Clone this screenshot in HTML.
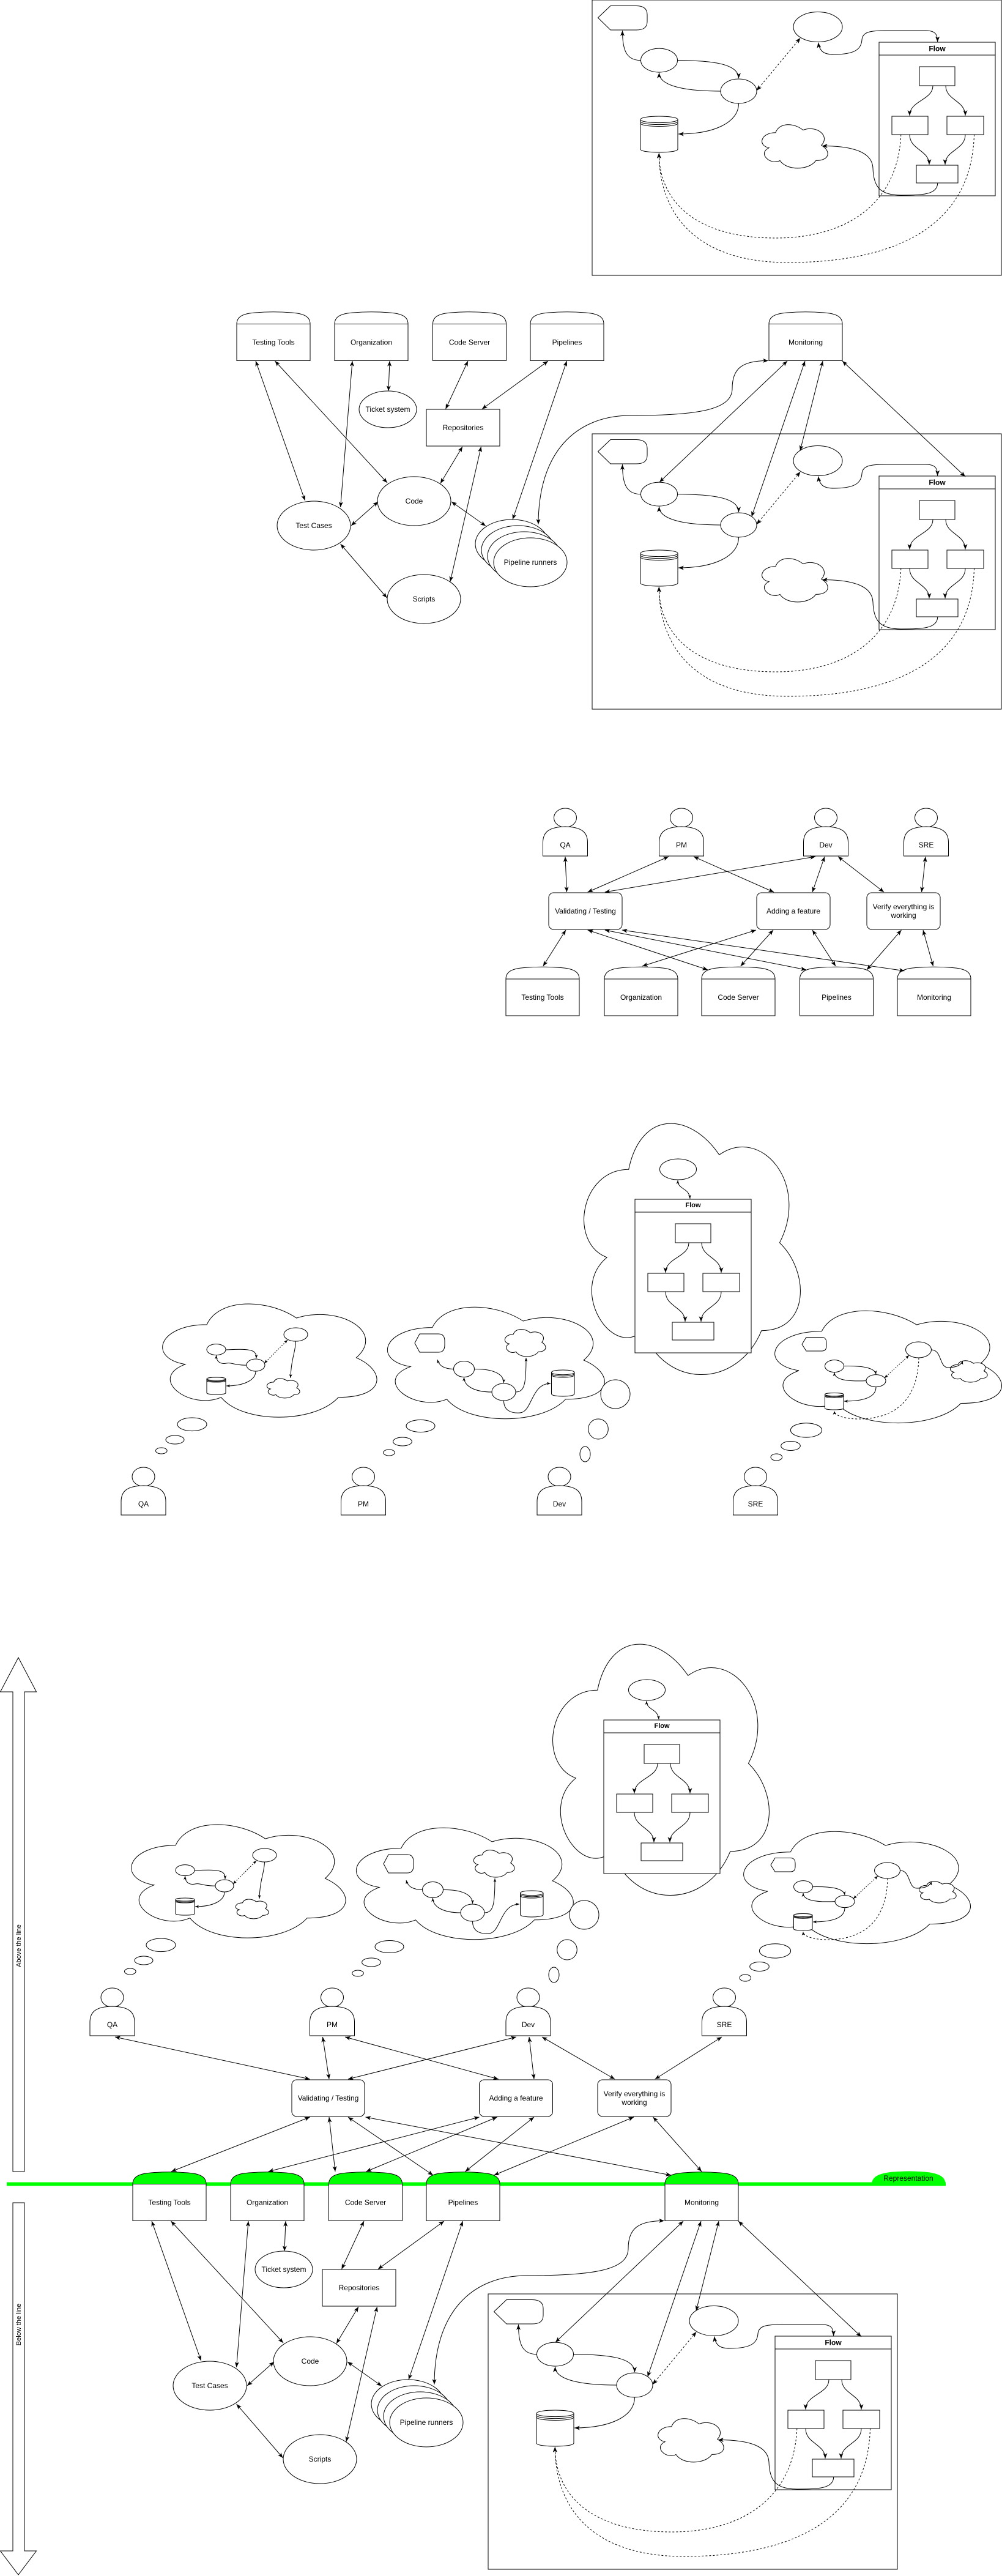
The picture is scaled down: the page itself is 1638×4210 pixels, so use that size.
<!DOCTYPE html>
<html><head><meta charset="utf-8"><style>
html,body{margin:0;padding:0;background:#fff;}
svg{display:block;}
.l,.b,.d,.e,.s,.sd,.de{fill:none;stroke:#000;stroke-width:1;}
.b{marker-start:url(#a);marker-end:url(#a);}
.e{marker-end:url(#a);}
.d{stroke-dasharray:3 3;marker-start:url(#a);marker-end:url(#a);}
.de{fill:none;stroke:#000;stroke-width:1;stroke-dasharray:3 3;marker-end:url(#a);}
.s{marker-end:url(#m);}
.sb{fill:none;stroke:#000;stroke-width:1;marker-start:url(#m);marker-end:url(#m);}
.sd{stroke-dasharray:2 2;marker-start:url(#m);marker-end:url(#m);}
.w{fill:#fff;stroke:#000;stroke-width:1;}
text{font-family:"Liberation Sans",Arial,sans-serif;font-size:12px;text-anchor:middle;dominant-baseline:central;fill:#000;}
.fl{font-weight:bold;}
.sm{font-size:11px;}
</style></head><body>
<svg width="1638" height="4210" viewBox="0 0 1638 4210" xmlns="http://www.w3.org/2000/svg">
<defs>
<marker id="a" viewBox="0 0 10 8" refX="10" refY="4" markerWidth="9" markerHeight="7" orient="auto-start-reverse" markerUnits="userSpaceOnUse"><path d="M0,0 L10,4 L0,8 L2.5,4 Z" fill="#000"/></marker>
<marker id="m" viewBox="0 0 10 8" refX="10" refY="4" markerWidth="6" markerHeight="5" orient="auto-start-reverse" markerUnits="userSpaceOnUse"><path d="M0,0 L10,4 L0,8 L2.5,4 Z" fill="#000"/></marker>
<path id="cl" class="w" vector-effect="non-scaling-stroke" d="M25,25 C5,25 0,50 16,55 C0,66 18,90 31,80 C40,100 70,100 80,80 C100,80 100,60 87.5,50 C100,30 80,10 62.5,20 C50,5 30,5 25,25 Z"/>
<g id="db">
<path class="w" vector-effect="non-scaling-stroke" d="M0,9 C0,-3 100,-3 100,9 V91 C100,103 0,103 0,91 Z"/>
<path class="l" vector-effect="non-scaling-stroke" d="M0,9 C0,21 100,21 100,9 M0,14 C0,26 100,26 100,14 M0,19 C0,31 100,31 100,19"/>
</g>
<g id="st">
<path d="M0,20 C0,8 10,3 30,1.5 Q60,-1 90,1.5 C110,3 120,8 120,20 Z" style="fill:var(--hdr,#fff);stroke:#000;stroke-width:1"/>
<rect x="0" y="20" width="120" height="60" class="w"/>
</g>
<g id="ps">
<ellipse cx="0" cy="15.5" rx="18.5" ry="15.5" class="w"/>
<path class="w" d="M-36.5,78 V56 C-36.5,40 -28,30.5 0,30 C28,30.5 36.5,40 36.5,56 V78 Z"/>
</g>
<g id="flow">
<rect x="0" y="0" width="190" height="251" class="w"/>
<line x1="0" y1="21" x2="190" y2="21" class="l"/>
<rect x="66" y="40" width="58" height="31" class="w"/>
<rect x="21" y="121" width="59" height="30" class="w"/>
<rect x="111" y="121" width="60" height="30" class="w"/>
<rect x="61" y="201" width="68" height="29" class="w"/>
<path class="e" d="M88,71 C88,95 50,95 50,120"/>
<path class="e" d="M109,71 C109,95 141,95 141,120"/>
<path class="e" d="M50,151 C50,176 82,176 82,200"/>
<path class="e" d="M141,151 C141,176 108,176 108,200"/>
</g>
<g id="panel">
<rect x="0" y="0" width="669" height="450" class="w"/>
<path class="w" d="M9.5,29 L30,9.5 H72 C84,9.5 90,14 90,24 V35 C90,45 84,49 72,49 H30 Z"/>
<ellipse cx="109.5" cy="98.6" rx="30" ry="19.5" class="w"/>
<ellipse cx="239.5" cy="149" rx="29.5" ry="20" class="w"/>
<ellipse cx="369" cy="44" rx="40" ry="24.5" class="w"/>
<use href="#db" transform="translate(79,190) scale(0.61,0.59)"/>
<use href="#cl" transform="translate(269.8,196) scale(1.2,0.83)"/>
<use href="#flow" x="469" y="69"/>
<path class="e" d="M79,98.6 C55,98.6 49.5,80 49.5,50"/>
<path class="e" d="M139.5,98.6 C200,99 239.5,105 239.5,128"/>
<path class="e" d="M210,149 C150,149 109.5,140 109.5,119"/>
<path class="e" d="M239.5,169 C239.5,200 200,219 141,219"/>
<path class="d" d="M268.9,148 L340.4,62"/>
<path class="b" d="M369.5,69.5 C372,85 380,89 395,89 C430,89 440,80 441,65 C442,52 455,50 480,50 L545,50 C560,50 564.6,55 564.6,68.5"/>
<path class="e" d="M564.7,299 C564.7,318 540,319 505,319 C470,319 460,305 459,275 C458,250 430,238.5 376,238.5"/>
<path class="de" d="M504.8,220 C500,330 420,389 300,389 C170,389 109.3,330 109.3,250"/>
<path class="de" d="M624.5,220 C620,380 480,429 320,429 C170,429 109.3,350 109.3,250"/>
</g>
<g id="s2">
<use href="#st" x="387" y="509.5"/>
<use href="#st" x="547" y="509.5"/>
<use href="#st" x="707.5" y="509.5"/>
<use href="#st" x="867" y="509.5"/>
<use href="#st" x="1257" y="509.5"/>
<ellipse cx="634" cy="669" rx="47" ry="30" class="w"/>
<rect x="697" y="669" width="120" height="60" class="w"/>
<ellipse cx="677" cy="819" rx="60" ry="40" class="w"/>
<ellipse cx="513" cy="859" rx="60" ry="40" class="w"/>
<ellipse cx="693" cy="979" rx="60" ry="40" class="w"/>
<ellipse cx="837" cy="889" rx="60" ry="40" class="w"/>
<ellipse cx="847" cy="899" rx="60" ry="40" class="w"/>
<ellipse cx="857" cy="909" rx="60" ry="40" class="w"/>
<ellipse cx="867" cy="919" rx="60" ry="40" class="w"/>
<use href="#panel" x="968" y="709"/>
<path class="b" d="M418,590 L498.6,818"/>
<path class="b" d="M449.5,590 L633,789"/>
<path class="b" d="M576,590 L556.6,829"/>
<path class="b" d="M637,590 L635,639"/>
<path class="b" d="M765,590 L728.5,668.5"/>
<path class="b" d="M896,590 L788,668.5"/>
<path class="b" d="M926.6,590 L838,849"/>
<path class="b" d="M756,730 L720,790"/>
<path class="b" d="M786.5,730 L736,950.5"/>
<path class="b" d="M738,820 L794,859.5"/>
<path class="b" d="M618,820 L574,859"/>
<path class="b" d="M556.6,889 L632.5,977"/>
<path class="b" d="M1256,589.5 C1210,589 1197,605 1197,635 C1197,670 1140,679 1032,679 C940,679 880,740 880,857"/>
<path class="b" d="M1287,590 L1078,788"/>
<path class="b" d="M1316,590 L1228.6,844.5"/>
<path class="b" d="M1345,590 L1308,736.6"/>
<path class="b" d="M1377,590 L1578,779"/>
</g>
<g id="s4">
<use href="#cl" transform="translate(240.3,2110.9) scale(3.91,2.16)"/>
<use href="#cl" transform="translate(607.7,2116.4) scale(3.96,2.13)"/>
<use href="#cl" transform="translate(929,1791.5) scale(3.948,4.79)"/>
<use href="#cl" transform="translate(1239.8,2122.3) scale(4.138,2.14)"/>
<ellipse cx="314" cy="2327.8" rx="24" ry="10.8" class="w"/>
<ellipse cx="286" cy="2353" rx="15" ry="7" class="w"/>
<ellipse cx="263.8" cy="2371" rx="9.3" ry="5" class="w"/>
<ellipse cx="687.5" cy="2330.5" rx="23.5" ry="10" class="w"/>
<ellipse cx="658" cy="2356" rx="15.4" ry="7" class="w"/>
<ellipse cx="636" cy="2374" rx="9.3" ry="5" class="w"/>
<ellipse cx="1006" cy="2278.5" rx="24" ry="23.5" class="w"/>
<ellipse cx="978" cy="2335.5" rx="16.3" ry="16.5" class="w"/>
<ellipse cx="956.5" cy="2376.5" rx="8.5" ry="12.5" class="w"/>
<ellipse cx="1318" cy="2337.4" rx="25.6" ry="11.7" class="w"/>
<ellipse cx="1292.5" cy="2363" rx="15.8" ry="7.5" class="w"/>
<ellipse cx="1269.3" cy="2381.5" rx="9.3" ry="5.5" class="w"/>
<use href="#ps" x="234.5" y="2398"/>
<use href="#ps" x="594" y="2398"/>
<use href="#ps" x="914.5" y="2398"/>
<use href="#ps" x="1235" y="2398"/>
<ellipse cx="353.5" cy="2205.6" rx="15.5" ry="9" class="w"/>
<ellipse cx="418" cy="2231" rx="15" ry="10" class="w"/>
<ellipse cx="483.5" cy="2181" rx="19.5" ry="11" class="w"/>
<use href="#db" transform="translate(338,2251) scale(0.31,0.28)"/>
<use href="#cl" transform="translate(432.4,2249.5) scale(0.6,0.373)"/>
<path class="s" d="M369,2206 C389,2205 410,2204 416,2210 C419,2213 419,2216 419,2220"/>
<path class="s" d="M403,2231 C385,2232 378,2226 370,2228 C360,2230 353.5,2225 353.5,2215"/>
<path class="s" d="M418,2241 C418,2255 400,2265 370,2265"/>
<path class="sd" d="M432,2228 L470,2190"/>
<path class="s" d="M483.5,2192 C483,2210 476,2220 475,2252"/>
<path class="w" d="M678,2195 L686,2180 H717 C724,2180 727,2184 727,2192 V2198 C727,2206 724,2210 717,2210 H686 Z"/>
<use href="#cl" transform="translate(820.5,2167.8) scale(0.744,0.518)"/>
<ellipse cx="758.5" cy="2237.5" rx="17" ry="13" class="w"/>
<ellipse cx="823.5" cy="2275" rx="19.5" ry="14" class="w"/>
<use href="#db" transform="translate(901.5,2239) scale(0.375,0.43)"/>
<path class="s" d="M741.5,2237.5 C725,2237 718,2232 715,2222"/>
<path class="s" d="M775.5,2237.5 C805,2237 823.5,2245 823.5,2260"/>
<path class="s" d="M804,2275 C775,2275 758.5,2265 758.5,2251"/>
<path class="s" d="M843,2275 C858,2275 860,2260 860,2219"/>
<path class="s" d="M823.5,2289 C823.5,2305 835,2310 850,2309 C870,2308 868,2261 900,2261"/>
<ellipse cx="1108.5" cy="1911" rx="30" ry="17" class="w"/>
<use href="#flow" x="1038" y="1960"/>
<path class="sb" d="M1108,1929 C1108,1945 1126,1940 1128,1959"/>
<path class="w" d="M1311,2197 L1318,2185.5 H1343 C1349,2185.5 1351,2189 1351,2195 V2199 C1351,2205 1349,2208 1343,2208 H1318 Z"/>
<ellipse cx="1364" cy="2232.6" rx="15.5" ry="10" class="w"/>
<ellipse cx="1432" cy="2256.6" rx="16" ry="10" class="w"/>
<ellipse cx="1501.5" cy="2206" rx="21" ry="13" class="w"/>
<use href="#cl" transform="translate(1549,2220) scale(0.678,0.41)"/>
<use href="#db" transform="translate(1348.5,2276.5) scale(0.305,0.275)"/>
<path class="s" d="M1379.5,2232.6 C1410,2232 1430,2235 1432,2246"/>
<path class="s" d="M1416,2256.6 C1385,2258 1364,2255 1364,2243"/>
<path class="s" d="M1432,2267 C1432,2282 1415,2290 1380,2290"/>
<path class="sd" d="M1446,2252 L1486,2215"/>
<path class="s" d="M1522.5,2206 C1540,2206 1535,2235 1550,2235 C1565,2235 1572,2230 1573.7,2224"/>
<path class="de" style="marker-end:url(#m)" d="M1502,2219 C1500,2300 1450,2320 1400,2319 C1375,2318 1364,2312 1364,2306"/>
</g>
</defs>

<use href="#panel" x="968" y="0"/>
<text x="1532" y="79.5" class="fl">Flow</text>

<use href="#s2"/>
<text x="447" y="559.5">Testing Tools</text>
<text x="607" y="559.5">Organization</text>
<text x="767.5" y="559.5">Code Server</text>
<text x="927" y="559.5">Pipelines</text>
<text x="1317" y="559.5">Monitoring</text>
<text x="634" y="669">Ticket system</text>
<text x="757" y="699">Repositories</text>
<text x="677" y="819">Code</text>
<text x="513" y="859">Test Cases</text>
<text x="693" y="979">Scripts</text>
<text x="867" y="919">Pipeline runners</text>
<text x="1532" y="788.5" class="fl">Flow</text>

<use href="#ps" x="924" y="1321"/>
<use href="#ps" x="1114" y="1321"/>
<use href="#ps" x="1350" y="1321"/>
<use href="#ps" x="1514" y="1321"/>
<text x="924" y="1381">QA</text>
<text x="1114" y="1381">PM</text>
<text x="1350" y="1381">Dev</text>
<text x="1514" y="1381">SRE</text>
<rect x="897" y="1459" width="120" height="60" rx="8" class="w"/>
<rect x="1237" y="1459" width="120" height="60" rx="8" class="w"/>
<rect x="1417" y="1459" width="120" height="60" rx="8" class="w"/>
<text x="957" y="1489">Validating / Testing</text>
<text x="1297" y="1489">Adding a feature</text>
<text x="1477" y="1482">Verify everything is</text>
<text x="1477" y="1496">working</text>
<use href="#st" x="827" y="1580"/>
<use href="#st" x="988" y="1580"/>
<use href="#st" x="1147" y="1580"/>
<use href="#st" x="1307.5" y="1580"/>
<use href="#st" x="1467" y="1580"/>
<text x="887" y="1630">Testing Tools</text>
<text x="1048" y="1630">Organization</text>
<text x="1207" y="1630">Code Server</text>
<text x="1367.5" y="1630">Pipelines</text>
<text x="1527" y="1630">Monitoring</text>
<path class="b" d="M924,1400 L926.5,1458"/>
<path class="b" d="M1093,1400 L960.7,1458"/>
<path class="b" d="M1134,1400 L1265,1458"/>
<path class="b" d="M1333,1400 L988.8,1458"/>
<path class="b" d="M1348,1400 L1328,1458"/>
<path class="b" d="M1370,1400 L1445,1458"/>
<path class="b" d="M1513,1400 L1506.6,1458"/>
<path class="b" d="M925,1520 L887.8,1579"/>
<path class="b" d="M960.7,1520 L1157,1585"/>
<path class="b" d="M988.8,1520 L1317.9,1585"/>
<path class="b" d="M1016.8,1520 L1478.6,1586.7"/>
<path class="b" d="M1236,1520 L1050,1579"/>
<path class="b" d="M1264,1520 L1210.7,1579"/>
<path class="b" d="M1328,1520 L1366,1579"/>
<path class="b" d="M1473.5,1520 L1417,1585"/>
<path class="b" d="M1509,1520 L1525.5,1579"/>

<use href="#s4"/>
<text x="1133" y="1970" class="fl sm">Flow</text>
<text x="234.5" y="2458">QA</text>
<text x="594" y="2458">PM</text>
<text x="914.5" y="2458">Dev</text>
<text x="1235" y="2458">SRE</text>

<g transform="translate(-51,851)"><use href="#s4"/></g>
<text x="1082" y="2821" class="fl sm">Flow</text>
<text x="183.5" y="3309">QA</text>
<text x="543" y="3309">PM</text>
<text x="863.5" y="3309">Dev</text>
<text x="1184" y="3309">SRE</text>

<polygon class="w" points="30,2709 59.5,2765 40,2765 40,3549 21,3549 21,2765 0.5,2765"/>
<polygon class="w" points="21,3600 40,3600 40,4169 59.5,4169 30,4208 0.5,4169 21,4169"/>
<text transform="translate(31,3180) rotate(-90)" class="sm">Above the line</text>
<text transform="translate(31,3799) rotate(-90)" class="sm">Below the line</text>

<rect x="477" y="3399" width="119" height="60" rx="8" class="w"/>
<rect x="783.5" y="3399" width="120" height="60" rx="8" class="w"/>
<rect x="977" y="3399" width="120" height="60" rx="8" class="w"/>
<text x="536.5" y="3429">Validating / Testing</text>
<text x="843.5" y="3429">Adding a feature</text>
<text x="1037" y="3422">Verify everything is</text>
<text x="1037" y="3436">working</text>
<path class="b" d="M188,3329 L506.6,3398"/>
<path class="b" d="M527.5,3329 L538,3398"/>
<path class="b" d="M564,3329 L814.8,3398"/>
<path class="b" d="M844,3329 L569,3398"/>
<path class="b" d="M865,3329 L873,3398"/>
<path class="b" d="M886,3329 L1005,3398"/>
<path class="b" d="M1180,3329 L1070.7,3398"/>

<line x1="11" y1="3569.5" x2="1546" y2="3569.5" stroke="#00ff00" stroke-width="6"/>
<path d="M1425,3570 C1425,3556 1440,3550 1470,3549 Q1486,3548 1502,3549 C1532,3550 1545.7,3556 1545.7,3570 Z" fill="#00ff00"/>
<text x="1485" y="3560">Representation</text>
<g transform="translate(-170,3040)" style="--hdr:#00ff00"><use href="#s2"/></g>
<text x="277" y="3599.5">Testing Tools</text>
<text x="437" y="3599.5">Organization</text>
<text x="597.5" y="3599.5">Code Server</text>
<text x="757" y="3599.5">Pipelines</text>
<text x="1147" y="3599.5">Monitoring</text>
<text x="464" y="3709">Ticket system</text>
<text x="587" y="3739">Repositories</text>
<text x="507" y="3859">Code</text>
<text x="343" y="3899">Test Cases</text>
<text x="523" y="4019">Scripts</text>
<text x="697" y="3959">Pipeline runners</text>
<text x="1362" y="3828.5" class="fl">Flow</text>

<path class="b" d="M506.6,3460 L280,3549"/>
<path class="b" d="M538,3460 L548,3549"/>
<path class="b" d="M569,3460 L708,3555"/>
<path class="b" d="M597.5,3460 L1097,3555"/>
<path class="b" d="M783.5,3460 L438.7,3549"/>
<path class="b" d="M812.7,3460 L598.6,3549"/>
<path class="b" d="M873,3460 L760.5,3549"/>
<path class="b" d="M1036,3460 L807.5,3555"/>
<path class="b" d="M1067.6,3460 L1147,3549"/>
</svg>
</body></html>
